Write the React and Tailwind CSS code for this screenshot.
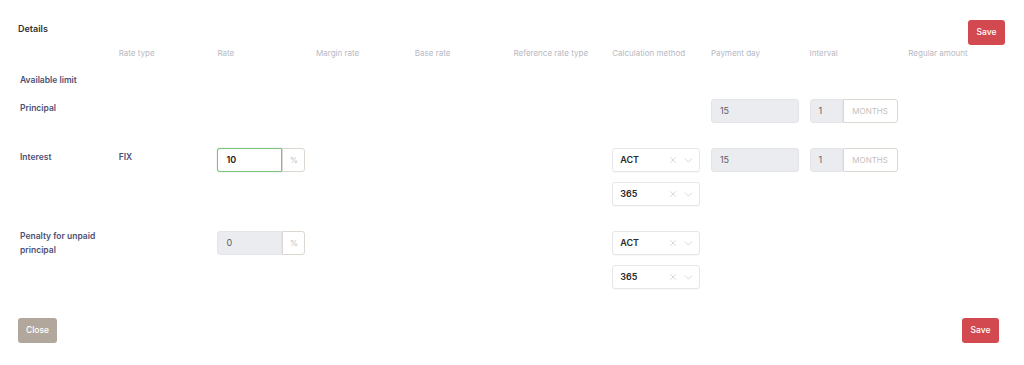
import { X, ChevronDown } from 'lucide-react'

const font = { fontFamily: 'Inter, "Noto Sans", sans-serif' }

const headers = ['Rate type', 'Rate', 'Margin rate', 'Base rate', 'Reference rate type', 'Calculation method', 'Payment day', 'Interval', 'Regular amount']

function Label({ children }) {
  return <div className="pt-[2px] pr-4 text-[8.5px] leading-[14px] font-semibold text-[#4d5075]">{children}</div>
}

function Disabled({ value }) {
  return (
    <div className="flex h-[24px] w-[88px] items-center rounded-[3px] border border-[#e3e4e8] bg-[#ebecef] px-[8px] text-[9px] text-[#5a5d6a]">
      {value}
    </div>
  )
}

function WithAddon({ value, addon, active, first = 'w-[65px]' }) {
  return (
    <div className="flex h-[24px] w-[88px]">
      <div
        className={
          'flex items-center rounded-l-[3px] px-[8px] text-[9px] ' +
          first +
          (active
            ? ' border border-[#79c478] bg-white font-semibold text-[#222] shadow-[0_0_1px_#79c478]'
            : ' border border-[#e3e4e8] bg-[#ebecef] text-[#5a5d6a]')
        }
      >
        {value}
      </div>
      <div className="flex flex-1 items-center justify-center rounded-r-[3px] border border-[#dcd7d0] bg-white text-[8px] text-[#c5c0ba]">
        {addon}
      </div>
    </div>
  )
}

function Select({ value }) {
  return (
    <div className="flex h-[24px] w-[88px] items-center rounded-[3px] border border-[#e6e6ea] bg-white pl-[7px] pr-[4px] shadow-[0_1px_1px_rgba(0,0,0,0.03)]">
      <span className="flex-1 text-[9px] font-semibold text-[#2a2a2a]">{value}</span>
      <X className="h-[10px] w-[10px] text-[#c4c4c8]" strokeWidth={1.5} />
      <ChevronDown className="ml-[4px] h-[13px] w-[13px] text-[#c4c4c8]" strokeWidth={1.2} />
    </div>
  )
}

export default function App() {
  return (
    <div style={font} className="h-[365px] w-[1024px] bg-white pt-[20px]">
      <div className="flex items-start justify-between pl-[18px] pr-[19px]">
        <div className="pt-[2px] text-[9px] font-semibold text-[#333]">Details</div>
        <button className="h-[25px] w-[37px] rounded-[3px] bg-[#d24a50] text-[8.5px] font-medium text-white">Save</button>
      </div>

      <div className="ml-[20px] w-[987px]">
        <div className="grid grid-cols-10 pt-[2px] text-[8px] text-[#b6b9c3]">
          <div />
          {headers.map((h) => (
            <div key={h}>{h}</div>
          ))}
        </div>

        <div className="grid grid-cols-10 pt-[12px]">
          <Label>Available limit</Label>
        </div>

        <div className="grid grid-cols-10 pt-[12px]">
          <Label>Principal</Label>
          <div />
          <div />
          <div />
          <div />
          <div />
          <div />
          <div><Disabled value="15" /></div>
          <div><WithAddon value="1" addon="MONTHS" first="w-[33px]" /></div>
        </div>

        <div className="grid grid-cols-10 pt-[25px]">
          <Label>Interest</Label>
          <Label>FIX</Label>
          <div><WithAddon value="10" addon="%" active /></div>
          <div />
          <div />
          <div />
          <div className="flex flex-col gap-[10px]">
            <Select value="ACT" />
            <Select value="365" />
          </div>
          <div><Disabled value="15" /></div>
          <div><WithAddon value="1" addon="MONTHS" first="w-[33px]" /></div>
        </div>

        <div className="grid grid-cols-10 pt-[25px]">
          <div className="-mt-[4px]"><Label>Penalty for unpaid principal</Label></div>
          <div />
          <div><WithAddon value="0" addon="%" /></div>
          <div />
          <div />
          <div />
          <div className="flex flex-col gap-[10px]">
            <Select value="ACT" />
            <Select value="365" />
          </div>
        </div>
      </div>

      <div className="flex justify-between pl-[18px] pr-[25px] pt-[29px]">
        <button className="h-[25px] w-[39px] rounded-[3px] bg-[#b1a79c] text-[8.5px] font-medium text-white">Close</button>
        <button className="h-[25px] w-[37px] rounded-[3px] bg-[#d24a50] text-[8.5px] font-medium text-white">Save</button>
      </div>
    </div>
  )
}
